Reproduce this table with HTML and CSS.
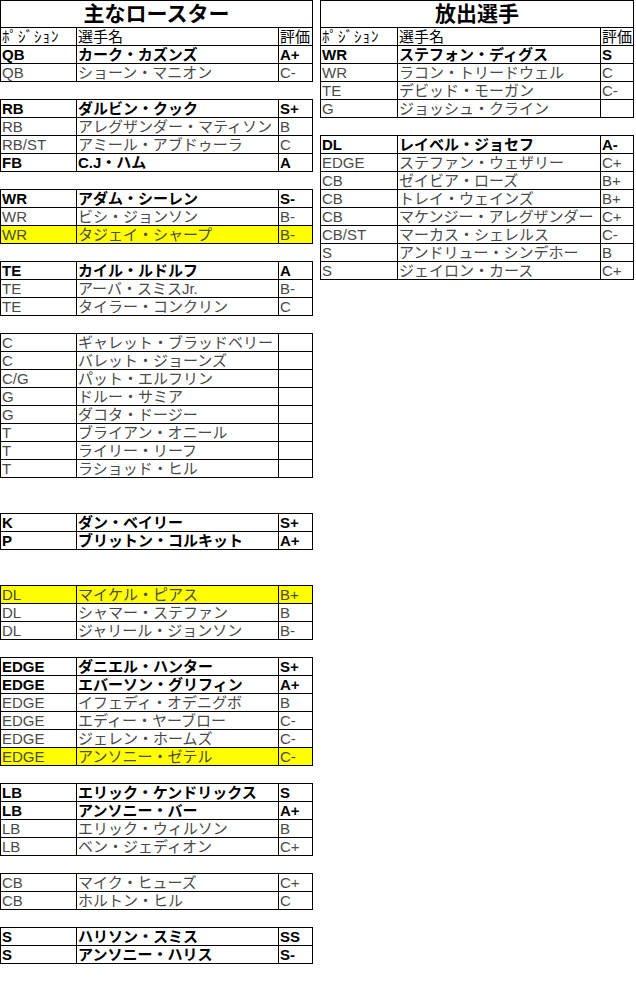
FILE: index.html
```html
<!DOCTYPE html>
<html lang="ja">
<head>
<meta charset="utf-8">
<title>ロースター</title>
<link rel="stylesheet" href="styles.css">
</head>
<body>
<div class="sheet">
  <div class="col L">
    <div class="grp">
      <div class="title">主なロースター</div>
      <div class="row hd"><div class="c pos">ﾎﾟｼﾞｼｮﾝ</div><div class="c">選手名</div><div class="c">評価</div></div>
      <div class="row b"><div class="c">QB</div><div class="c">カーク・カズンズ</div><div class="c">A+</div></div>
      <div class="row"><div class="c">QB</div><div class="c">ショーン・マニオン</div><div class="c">C-</div></div>
    </div>
    <div class="grp g1">
      <div class="row b"><div class="c">RB</div><div class="c">ダルビン・クック</div><div class="c">S+</div></div>
      <div class="row"><div class="c">RB</div><div class="c">アレグザンダー・マティソン</div><div class="c">B</div></div>
      <div class="row"><div class="c">RB/ST</div><div class="c">アミール・アブドゥーラ</div><div class="c">C</div></div>
      <div class="row b"><div class="c">FB</div><div class="c">C.J・ハム</div><div class="c">A</div></div>
    </div>
    <div class="grp g1">
      <div class="row b"><div class="c">WR</div><div class="c">アダム・シーレン</div><div class="c">S-</div></div>
      <div class="row"><div class="c">WR</div><div class="c">ビシ・ジョンソン</div><div class="c">B-</div></div>
      <div class="row hl"><div class="c">WR</div><div class="c">タジェイ・シャープ</div><div class="c">B-</div></div>
    </div>
    <div class="grp g1">
      <div class="row b"><div class="c">TE</div><div class="c">カイル・ルドルフ</div><div class="c">A</div></div>
      <div class="row"><div class="c">TE</div><div class="c">アーバ・スミスJr.</div><div class="c">B-</div></div>
      <div class="row"><div class="c">TE</div><div class="c">タイラー・コンクリン</div><div class="c">C</div></div>
    </div>
    <div class="grp g1">
      <div class="row"><div class="c">C</div><div class="c">ギャレット・ブラッドベリー</div><div class="c"></div></div>
      <div class="row"><div class="c">C</div><div class="c">バレット・ジョーンズ</div><div class="c"></div></div>
      <div class="row"><div class="c">C/G</div><div class="c">パット・エルフリン</div><div class="c"></div></div>
      <div class="row"><div class="c">G</div><div class="c">ドルー・サミア</div><div class="c"></div></div>
      <div class="row"><div class="c">G</div><div class="c">ダコタ・ドージー</div><div class="c"></div></div>
      <div class="row"><div class="c">T</div><div class="c">ブライアン・オニール</div><div class="c"></div></div>
      <div class="row"><div class="c">T</div><div class="c">ライリー・リーフ</div><div class="c"></div></div>
      <div class="row"><div class="c">T</div><div class="c">ラショッド・ヒル</div><div class="c"></div></div>
    </div>
    <div class="grp g2">
      <div class="row b"><div class="c">K</div><div class="c">ダン・ベイリー</div><div class="c">S+</div></div>
      <div class="row b"><div class="c">P</div><div class="c">ブリットン・コルキット</div><div class="c">A+</div></div>
    </div>
    <div class="grp g2">
      <div class="row hl"><div class="c">DL</div><div class="c">マイケル・ピアス</div><div class="c">B+</div></div>
      <div class="row"><div class="c">DL</div><div class="c">シャマー・ステファン</div><div class="c">B</div></div>
      <div class="row"><div class="c">DL</div><div class="c">ジャリール・ジョンソン</div><div class="c">B-</div></div>
    </div>
    <div class="grp g1">
      <div class="row b"><div class="c">EDGE</div><div class="c">ダニエル・ハンター</div><div class="c">S+</div></div>
      <div class="row b"><div class="c">EDGE</div><div class="c">エバーソン・グリフィン</div><div class="c">A+</div></div>
      <div class="row"><div class="c">EDGE</div><div class="c">イフェディ・オデニグボ</div><div class="c">B</div></div>
      <div class="row"><div class="c">EDGE</div><div class="c">エディー・ヤーブロー</div><div class="c">C-</div></div>
      <div class="row"><div class="c">EDGE</div><div class="c">ジェレン・ホームズ</div><div class="c">C-</div></div>
      <div class="row hl"><div class="c">EDGE</div><div class="c">アンソニー・ゼテル</div><div class="c">C-</div></div>
    </div>
    <div class="grp g1">
      <div class="row b"><div class="c">LB</div><div class="c">エリック・ケンドリックス</div><div class="c">S</div></div>
      <div class="row b"><div class="c">LB</div><div class="c">アンソニー・バー</div><div class="c">A+</div></div>
      <div class="row"><div class="c">LB</div><div class="c">エリック・ウィルソン</div><div class="c">B</div></div>
      <div class="row"><div class="c">LB</div><div class="c">ベン・ジェディオン</div><div class="c">C+</div></div>
    </div>
    <div class="grp g1">
      <div class="row"><div class="c">CB</div><div class="c">マイク・ヒューズ</div><div class="c">C+</div></div>
      <div class="row"><div class="c">CB</div><div class="c">ホルトン・ヒル</div><div class="c">C</div></div>
    </div>
    <div class="grp g1">
      <div class="row b"><div class="c">S</div><div class="c">ハリソン・スミス</div><div class="c">SS</div></div>
      <div class="row b"><div class="c">S</div><div class="c">アンソニー・ハリス</div><div class="c">S-</div></div>
    </div>
  </div>

  <div class="col R">
    <div class="grp">
      <div class="title">放出選手</div>
      <div class="row hd"><div class="c pos">ﾎﾟｼﾞｼｮﾝ</div><div class="c">選手名</div><div class="c">評価</div></div>
      <div class="row b"><div class="c">WR</div><div class="c">ステフォン・ディグス</div><div class="c">S</div></div>
      <div class="row"><div class="c">WR</div><div class="c">ラコン・トリードウェル</div><div class="c">C</div></div>
      <div class="row"><div class="c">TE</div><div class="c">デビッド・モーガン</div><div class="c">C-</div></div>
      <div class="row"><div class="c">G</div><div class="c">ジョッシュ・クライン</div><div class="c"></div></div>
    </div>
    <div class="grp g1">
      <div class="row b"><div class="c">DL</div><div class="c">レイベル・ジョセフ</div><div class="c">A-</div></div>
      <div class="row"><div class="c">EDGE</div><div class="c">ステファン・ウェザリー</div><div class="c">C+</div></div>
      <div class="row"><div class="c">CB</div><div class="c">ゼイビア・ローズ</div><div class="c">B+</div></div>
      <div class="row"><div class="c">CB</div><div class="c">トレイ・ウェインズ</div><div class="c">B+</div></div>
      <div class="row"><div class="c">CB</div><div class="c">マケンジー・アレグザンダー</div><div class="c">C+</div></div>
      <div class="row"><div class="c">CB/ST</div><div class="c">マーカス・シェレルス</div><div class="c">C-</div></div>
      <div class="row"><div class="c">S</div><div class="c">アンドリュー・シンデホー</div><div class="c">B</div></div>
      <div class="row"><div class="c">S</div><div class="c">ジェイロン・カース</div><div class="c">C+</div></div>
    </div>
  </div>
</div>
</body>
</html>
```

FILE: styles.css
```css
html, body {
  margin: 0;
  padding: 0;
  background: #fff;
}

body {
  font-family: "Liberation Sans", "Noto Sans CJK JP", sans-serif;
  font-size: 15px;
  color: #4a4a4a;
}

.sheet {
  display: flex;
  align-items: flex-start;
  gap: 7px;
}

.col.L {
  width: 313px;
  --cols: 76px 202px 34px;
}

.col.R {
  width: 314px;
  --cols: 77px 203px 33px;
}

.grp {
  border-top: 1px solid #000;
  border-left: 1px solid #000;
}

.g1 {
  margin-top: 17px;
}

.g2 {
  margin-top: 35px;
}

.title {
  box-sizing: border-box;
  height: 27px;
  border-right: 1px solid #000;
  border-bottom: 1px solid #000;
  text-align: center;
  font-size: 21px;
  font-weight: bold;
  line-height: 26px;
  color: #000;
}

.row {
  display: grid;
  grid-template-columns: var(--cols);
  height: 18px;
}

.c {
  box-sizing: border-box;
  height: 18px;
  border-right: 1px solid #000;
  border-bottom: 1px solid #000;
  padding: 0 1px;
  line-height: 18px;
  white-space: nowrap;
  overflow: hidden;
}

.hd {
  color: #000;
}

.hd .pos {
  letter-spacing: 1px;
}

.b {
  color: #000;
  font-weight: bold;
}

.hl {
  background: #ffff00;
}
```
